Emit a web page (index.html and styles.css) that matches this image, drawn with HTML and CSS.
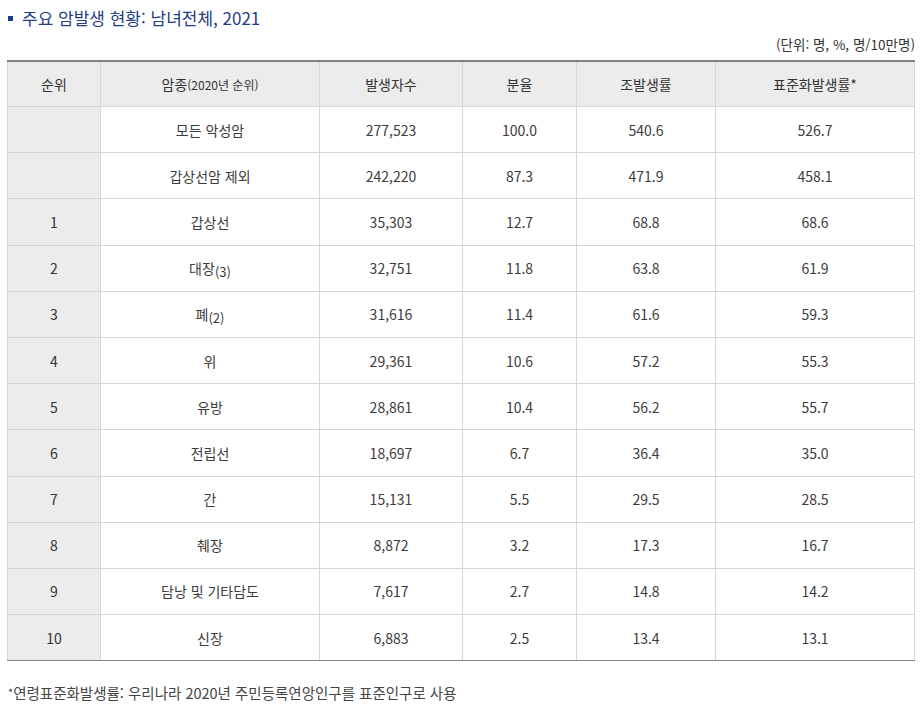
FILE: index.html
```html
<!DOCTYPE html>
<html lang="ko">
<head>
<meta charset="utf-8">
<link rel="stylesheet" href="styles.css">
</head>
<body>
<div class="page">
  <h2 class="title"><span class="bullet"></span>주요 암발생 현황: 남녀전체, 2021</h2>
  <p class="unit">(단위: 명, %, 명/10만명)</p>
  <table class="stats">
    <colgroup>
      <col style="width:93px"><col style="width:219px"><col style="width:143px"><col style="width:114px"><col style="width:139px"><col>
    </colgroup>
    <thead>
      <tr><th>순위</th><th>암종<small>(2020년 순위)</small></th><th>발생자수</th><th>분율</th><th>조발생률</th><th>표준화발생률*</th></tr>
    </thead>
    <tbody>
      <tr><td class="rank"></td><td>모든 악성암</td><td>277,523</td><td>100.0</td><td>540.6</td><td>526.7</td></tr>
      <tr><td class="rank"></td><td>갑상선암 제외</td><td>242,220</td><td>87.3</td><td>471.9</td><td>458.1</td></tr>
      <tr><td class="rank">1</td><td>갑상선</td><td>35,303</td><td>12.7</td><td>68.8</td><td>68.6</td></tr>
      <tr><td class="rank">2</td><td>대장<span class="prev">(3)</span></td><td>32,751</td><td>11.8</td><td>63.8</td><td>61.9</td></tr>
      <tr><td class="rank">3</td><td>폐<span class="prev">(2)</span></td><td>31,616</td><td>11.4</td><td>61.6</td><td>59.3</td></tr>
      <tr><td class="rank">4</td><td>위</td><td>29,361</td><td>10.6</td><td>57.2</td><td>55.3</td></tr>
      <tr><td class="rank">5</td><td>유방</td><td>28,861</td><td>10.4</td><td>56.2</td><td>55.7</td></tr>
      <tr><td class="rank">6</td><td>전립선</td><td>18,697</td><td>6.7</td><td>36.4</td><td>35.0</td></tr>
      <tr><td class="rank">7</td><td>간</td><td>15,131</td><td>5.5</td><td>29.5</td><td>28.5</td></tr>
      <tr><td class="rank">8</td><td>췌장</td><td>8,872</td><td>3.2</td><td>17.3</td><td>16.7</td></tr>
      <tr><td class="rank">9</td><td>담낭 및 기타담도</td><td>7,617</td><td>2.7</td><td>14.8</td><td>14.2</td></tr>
      <tr><td class="rank">10</td><td>신장</td><td>6,883</td><td>2.5</td><td>13.4</td><td>13.1</td></tr>
    </tbody>
  </table>
  <p class="note"><span class="star">*</span>연령표준화발생률: 우리나라 2020년 주민등록연앙인구를 표준인구로 사용</p>
</div>
</body>
</html>
```
FILE: styles.css
```css
html, body {
  margin: 0;
  padding: 0;
  background: #fff;
}
body {
  font-family: "Noto Sans CJK KR", "Noto Sans", sans-serif;
  color: #444;
}
.page {
  padding: 6px 8px 0 7px;
  width: 908px;
}
.title {
  margin: 0;
  display: flex;
  align-items: center;
  font-size: 17px;
  font-weight: 400;
  line-height: 24px;
  color: #1f3c88;
}
.bullet {
  display: inline-block;
  width: 5px;
  height: 5px;
  background: #1f3c88;
  margin: 0 9px 0 1px;
}
.unit {
  margin: 4px 0 0;
  text-align: right;
  font-size: 13.5px;
  line-height: 20px;
  color: #333;
}
.stats {
  margin-top: 6px;
  width: 908px;
  border-collapse: collapse;
  table-layout: fixed;
  border-top: 2px solid #808080;
  border-bottom: 1px solid #888;
  font-size: 14px;
}
.stats th, .stats td {
  border: 1px solid #d6d6d6;
  text-align: center;
  padding: 0;
}
.stats th {
  height: 44px;
  background: #ececec;
  font-weight: 400;
  color: #333;
  border-top: 2px solid #808080;
}
.stats th small {
  font-size: 12px;
}
.stats td {
  height: 45.2px;
  color: #3c3c3c;
}
.stats tbody tr:last-child td {
  border-bottom: 1px solid #888;
}
.stats td.rank {
  background: #ececec;
  color: #333;
}
.prev {
  font-size: 13px;
  position: relative;
  top: 3px;
}
.note {
  margin: 22px 0 0 1px;
  font-size: 14.5px;
  line-height: 20px;
  color: #444;
}
.star {
  font-size: 11px;
  position: relative;
  top: -2px;
}
```
